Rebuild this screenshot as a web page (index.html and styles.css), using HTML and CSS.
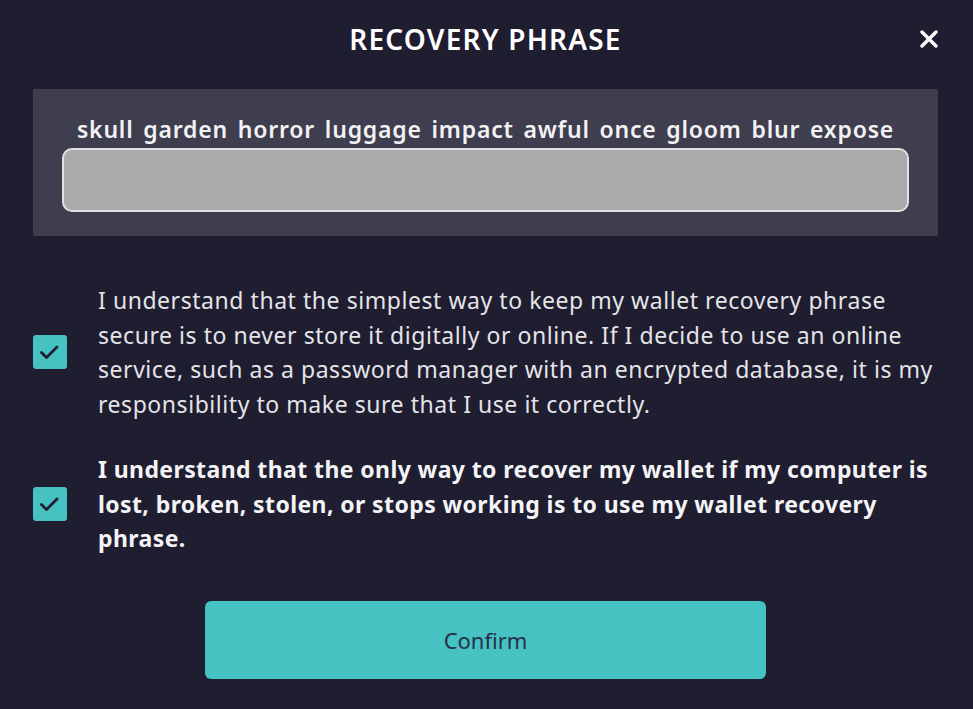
FILE: index.html
```html
<!DOCTYPE html>
<html lang="en">
<head>
    <meta charset="UTF-8">
    <title>Recovery Phrase</title>
    <link rel="stylesheet" href="styles.css">
</head>
<body>
    <div class="dialog">
        <div class="header">
            <h1>RECOVERY PHRASE</h1>
            <button class="close" aria-label="Close">
                <svg width="18" height="18" viewBox="0 0 18 18">
                    <path d="M2 2 L16 16 M16 2 L2 16" stroke="#ffffff" stroke-width="3.4" stroke-linecap="round"/>
                </svg>
            </button>
        </div>

        <div class="phrase-box">
            <p class="words">skull garden horror luggage impact awful once gloom blur expose</p>
            <input class="phrase-input" type="text">
        </div>

        <div class="terms">
            <label class="term">
                <span class="check">
                    <svg width="34" height="34" viewBox="0 0 34 34">
                        <path d="M8.5 17.5 L13.5 22.5 L24 12" fill="none" stroke="#1f1d30" stroke-width="2.8" stroke-linecap="round" stroke-linejoin="round"/>
                    </svg>
                </span>
                <span class="term-text">I understand that the simplest way to keep my wallet recovery phrase secure is to never store it digitally or online. If I decide to use an online service, such as a password manager with an encrypted database, it is my responsibility to make sure that I use it correctly.</span>
            </label>
            <label class="term bold">
                <span class="check">
                    <svg width="34" height="34" viewBox="0 0 34 34">
                        <path d="M8.5 17.5 L13.5 22.5 L24 12" fill="none" stroke="#1f1d30" stroke-width="2.8" stroke-linecap="round" stroke-linejoin="round"/>
                    </svg>
                </span>
                <span class="term-text">I understand that the only way to recover my wallet if my computer is lost, broken, stolen, or stops working is to use my wallet recovery phrase.</span>
            </label>
        </div>

        <button class="confirm">Confirm</button>
    </div>
</body>
</html>
```

FILE: styles.css
```css
:root {
    --bg-color: #1f1d30;
    --panel-color: #3e3e4e;
    --teal: #47c2c2;
    --text-color: #e4e4e8;
}

body {
    margin: 0;
    background-color: var(--bg-color);
    font-family: 'Noto Sans', 'Open Sans', sans-serif;
    color: var(--text-color);
}

.dialog {
    padding: 0 35px 0 33px;
}

.header {
    position: relative;
    height: 78px;
    display: flex;
    align-items: center;
    justify-content: center;
}

.header h1 {
    margin: 0;
    font-size: 28px;
    font-weight: 600;
    letter-spacing: 1.2px;
    color: #ffffff;
}

.close {
    position: absolute;
    right: 0;
    top: 30px;
    padding: 0;
    border: none;
    background: none;
    cursor: pointer;
    line-height: 0;
}

.phrase-box {
    margin-top: 11px;
    background-color: var(--panel-color);
    border-radius: 2px;
    padding: 25px 29px 24px;
}

.words {
    margin: 0 0 4px;
    text-align: center;
    font-size: 23px;
    font-weight: 600;
    line-height: 30px;
    letter-spacing: 0.8px;
    word-spacing: 3px;
    color: #f2f2f4;
}

.phrase-input {
    display: block;
    width: 100%;
    height: 64px;
    box-sizing: border-box;
    background-color: #aaaaaa;
    border: 2px solid #e2e2e2;
    border-radius: 10px;
}

.terms {
    margin-top: 47px;
    display: flex;
    flex-direction: column;
    gap: 31px;
}

.term {
    display: flex;
    align-items: center;
    gap: 31px;
}

.check {
    flex: none;
    width: 34px;
    height: 34px;
    border-radius: 3px;
    background-color: var(--teal);
    display: flex;
    align-items: center;
    justify-content: center;
}

.term-text {
    font-size: 23px;
    line-height: 34.5px;
    letter-spacing: 0.55px;
}

.term.bold .term-text {
    font-weight: 700;
    letter-spacing: 0.4px;
    color: #f4f4f6;
}

.confirm {
    display: block;
    margin: 45px auto 0;
    width: 561px;
    height: 78px;
    border: none;
    border-radius: 6px;
    background-color: var(--teal);
    font-family: 'Noto Sans', 'Open Sans', sans-serif;
    font-size: 22px;
    color: #26304a;
    cursor: pointer;
}
```
